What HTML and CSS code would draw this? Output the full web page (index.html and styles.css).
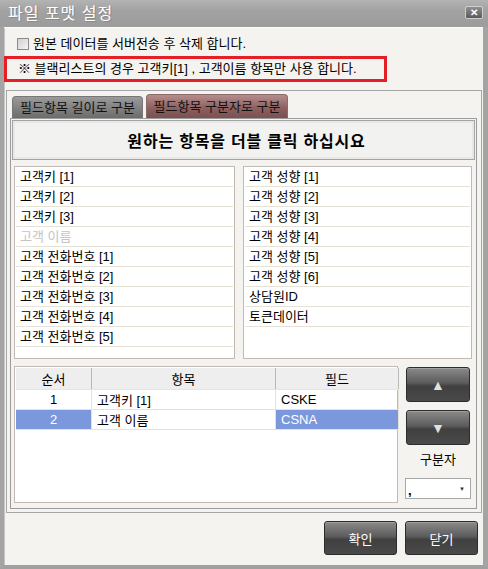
FILE: index.html
```html
<!DOCTYPE html>
<html lang="ko">
<head>
<meta charset="UTF-8">
<title>파일 포맷 설정</title>
<link rel="stylesheet" href="styles.css">
</head>
<body>
    <div class="window">
        <div class="titlebar">
            <span class="title">파일 포맷 설정</span>
            <span class="close-btn">✕</span>
        </div>
        <div class="frame">
            <div class="option-panel">
                <label class="check-row"><span class="checkbox"></span>원본 데이터를 서버전송 후 삭제 합니다.</label>
                <div class="notice">※ 블랙리스트의 경우 고객키[1] , 고객이름 항목만 사용 합니다.</div>
            </div>

            <div class="tab-frame">
                <div class="tabs">
                    <div class="tab">필드항목 길이로 구분</div>
                    <div class="tab tab-active">필드항목 구분자로 구분</div>
                </div>
                <div class="tab-page">
                    <div class="guide">원하는 항목을 더블 클릭 하십시요</div>

                    <div class="lists">
                        <ul class="list list-left">
                            <li>고객키 [1]</li>
                            <li>고객키 [2]</li>
                            <li>고객키 [3]</li>
                            <li class="disabled">고객 이름</li>
                            <li>고객 전화번호 [1]</li>
                            <li>고객 전화번호 [2]</li>
                            <li>고객 전화번호 [3]</li>
                            <li>고객 전화번호 [4]</li>
                            <li>고객 전화번호 [5]</li>
                        </ul>
                        <ul class="list list-right">
                            <li>고객 성향 [1]</li>
                            <li>고객 성향 [2]</li>
                            <li>고객 성향 [3]</li>
                            <li>고객 성향 [4]</li>
                            <li>고객 성향 [5]</li>
                            <li>고객 성향 [6]</li>
                            <li>상담원ID</li>
                            <li>토큰데이터</li>
                        </ul>
                    </div>

                    <div class="order">
                        <div class="grid">
                            <table>
                                <thead>
                                    <tr><th class="col-no">순서</th><th class="col-item">항목</th><th class="col-field">필드</th></tr>
                                </thead>
                                <tbody>
                                    <tr><td class="col-no">1</td><td class="col-item">고객키 [1]</td><td class="col-field">CSKE</td></tr>
                                    <tr class="selected"><td class="col-no">2</td><td class="col-item">고객 이름</td><td class="col-field">CSNA</td></tr>
                                </tbody>
                            </table>
                        </div>
                        <div class="side">
                            <button class="dark-btn move-btn">▲</button>
                            <button class="dark-btn move-btn">▼</button>
                            <div class="sep-label">구분자</div>
                            <div class="combo"><span class="combo-value">,</span><span class="combo-arrow">▼</span></div>
                        </div>
                    </div>
                </div>
            </div>

            <div class="actions">
                <button class="dark-btn action-btn">확인</button>
                <button class="dark-btn action-btn">닫기</button>
            </div>
        </div>
    </div>
</body>
</html>
```

FILE: styles.css
```css
body {
    margin: 0;
    font-family: "Liberation Sans", "Noto Sans CJK KR", sans-serif;
    font-size: 13px;
    color: #000;
    background-color: #fff;
}

.window {
    width: 488px;
    height: 569px;
    display: flex;
    flex-direction: column;
    background-color: #9a9a9a;
}

.titlebar {
    height: 27px;
    flex: none;
    display: flex;
    align-items: center;
    justify-content: space-between;
    padding: 0 5px 0 8px;
    background: linear-gradient(#b3b3b3, #a2a2a2 40%, #9c9c9c);
    box-sizing: border-box;
}

.title {
    font-size: 16px;
    line-height: 20px;
    color: #fff;
    letter-spacing: 1px;
    text-shadow: 1px 1px 0 #8a8a8a;
    margin-top: 1px;
}

.close-btn {
    width: 16px;
    height: 11px;
    display: flex;
    align-items: center;
    justify-content: center;
    font-size: 10px;
    font-weight: bold;
    color: #fff;
    background: linear-gradient(#909090, #5a5a5a);
    border: 1px solid #cfcfcf;
    border-radius: 2px;
    margin-top: -2px;
}

.frame {
    flex: 1;
    display: flex;
    flex-direction: column;
    background-color: #f4f3ef;
    border-left: 4px solid #a4a4a4;
    border-right: 5px solid #a4a4a4;
    border-bottom: 4px solid #a0a0a0;
    box-shadow: inset 1px 0 #c4c4c4;
}

.option-panel {
    padding-top: 6px;
    border-top: 1px solid #fbfbfa;
}

.check-row {
    height: 20px;
    display: flex;
    align-items: center;
    padding-left: 13px;
    line-height: 20px;
}

.checkbox {
    width: 10px;
    height: 10px;
    margin-right: 4px;
    border: 1px solid #8c8c8c;
    background: linear-gradient(135deg, #d0d0d0, #f6f6f6);
}

.notice {
    width: 383px;
    height: 26px;
    margin-top: 2px;
    box-sizing: border-box;
    border: 3px solid #e61e25;
    padding-left: 11px;
    line-height: 20px;
}

.tab-frame {
    margin: 8px 1px 0 2px;
    height: 423px;
    box-sizing: border-box;
    border: 1px solid #a6a6a6;
    padding: 3px 4px 3px 3px;
    display: flex;
    flex-direction: column;
}

.tabs {
    display: flex;
    align-items: flex-end;
    gap: 3px;
    padding-left: 2px;
    height: 24px;
}

.tab {
    height: 22px;
    line-height: 22px;
    width: 131px;
    box-sizing: border-box;
    text-align: center;
    border: 1px solid #777;
    border-bottom: none;
    border-radius: 4px 4px 0 0;
    background: linear-gradient(#9a9a9a, #6c6c6c);
    color: #111;
    white-space: nowrap;
}

.tab-active {
    height: 24px;
    line-height: 24px;
    width: 142px;
    border-color: #8a6a6a;
    background: linear-gradient(#b58c8c, #8c5e5e 60%, #7a5050);
}

.tab-page {
    flex: 1;
    border: 1px solid #9c9c9c;
    padding: 1px 1px 0 1px;
    display: flex;
    flex-direction: column;
}

.guide {
    height: 40px;
    box-sizing: border-box;
    border: 1px solid #a4a4a4;
    box-shadow: inset 0 0 0 2px #e8e8e6;
    background-color: #f2f2f0;
    display: flex;
    align-items: center;
    justify-content: center;
    font-size: 16px;
    font-weight: bold;
    letter-spacing: 0.8px;
    padding-left: 6px;
}

.lists {
    display: flex;
    gap: 8px;
    margin-top: 6px;
    padding-left: 2px;
}

.list {
    list-style: none;
    margin: 0;
    padding: 0 1px;
    height: 193px;
    box-sizing: border-box;
    border: 1px solid #c2bab2;
    background-color: #fff;
}

.list-left {
    width: 221px;
}

.list-right {
    width: 229px;
}

.list li {
    height: 20px;
    line-height: 20px;
    padding-left: 4px;
    border-bottom: 1px solid #e6e2d6;
    box-sizing: border-box;
    white-space: nowrap;
}

.list li.disabled {
    color: #c4c4c4;
}

.order {
    display: flex;
    margin-top: 7px;
    padding-left: 2px;
}

.grid {
    width: 384px;
    height: 137px;
    box-sizing: border-box;
    border: 1px solid #c2bab2;
    background-color: #fff;
    padding: 1px 0 0 1px;
}

.grid table {
    border-collapse: collapse;
    table-layout: fixed;
    width: 380px;
}

.grid th {
    height: 21px;
    font-weight: normal;
    background-color: #eeeeee;
    border-right: 1px solid #b8b8b8;
    border-bottom: 1px solid #e4e4e4;
    text-align: center;
    padding: 0;
}

.grid td {
    height: 19px;
    padding: 0 5px;
    border-right: 1px solid #e6e2d6;
    border-bottom: 1px solid #e6e2d6;
    white-space: nowrap;
}

.col-no {
    width: 75px;
}

.col-item {
    width: 183px;
}

.col-field {
    width: 122px;
}

.grid td.col-no {
    text-align: center;
}

.selected td.col-no,
.selected td.col-field {
    background-color: #7b98dc;
    color: #fff;
}

.side {
    width: 66px;
    margin-left: 7px;
    display: flex;
    flex-direction: column;
    align-items: center;
}

.dark-btn {
    font-family: inherit;
    color: #fff;
    border: 1px solid #2c2c2c;
    border-radius: 3px;
    background: linear-gradient(#8a8a8a, #5c5c5c 45%, #404040 55%, #4a4a4a);
    box-shadow: inset 0 1px 0 #a0a0a0;
    padding: 0;
    cursor: pointer;
}

.move-btn {
    width: 64px;
    height: 35px;
    margin-top: 1px;
    font-size: 14px;
    color: #e0e0e0;
}

.move-btn + .move-btn {
    margin-top: 8px;
}

.sep-label {
    margin-top: 7px;
    height: 16px;
    line-height: 16px;
}

.combo {
    width: 66px;
    height: 21px;
    margin-top: 10px;
    box-sizing: border-box;
    border: 1px solid #a8a8a8;
    background-color: #fff;
    display: flex;
    align-items: center;
    justify-content: space-between;
    padding: 0 5px 0 2px;
}

.combo-value {
    font-weight: bold;
    margin-top: 4px;
}

.combo-arrow {
    font-size: 6px;
    color: #333;
}

.actions {
    display: flex;
    justify-content: flex-end;
    gap: 8px;
    margin-top: 8px;
    padding-right: 5px;
}

.action-btn {
    width: 73px;
    height: 34px;
    font-size: 13px;
}
```
